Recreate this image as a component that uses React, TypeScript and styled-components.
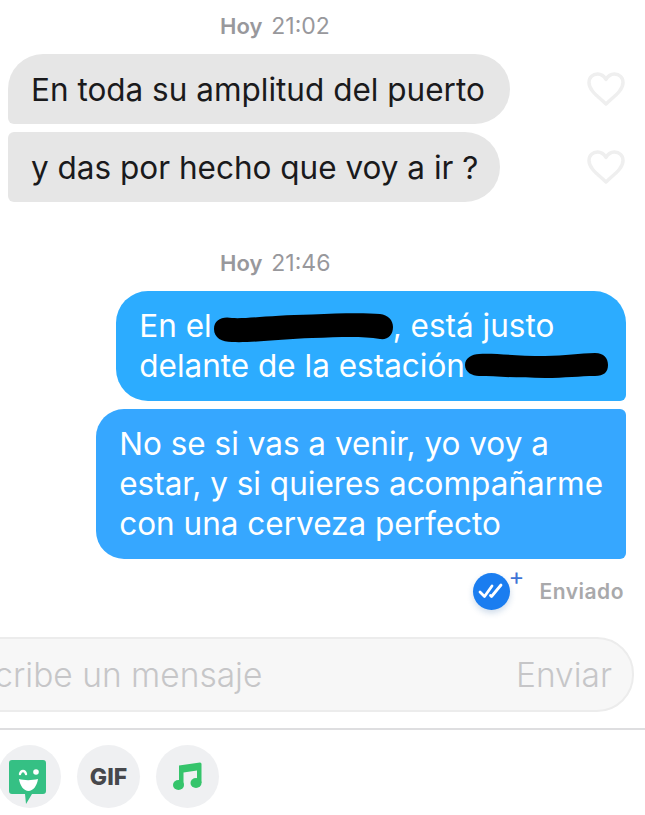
import React from "react"
import styled, { createGlobalStyle } from "styled-components"

const GlobalStyle = createGlobalStyle`
  html, body {
    margin: 0;
    padding: 0;
    background: #fff;
    overflow: hidden;
  }
`

const Page = styled.div`
  width: 645px;
  height: 815px;
  overflow: hidden;
  display: flex;
  flex-direction: column;
  font-family: Inter, Roboto, "Liberation Sans", sans-serif;
  background: #fff;
`

const Stamp = styled.div<{ $top: number }>`
  margin-top: ${p => p.$top}px;
  margin-left: 220px;
  height: 28px;
  display: flex;
  align-items: center;
  gap: 9px;
  font-size: 23px;
  color: #98989c;
  b {
    font-weight: 600;
    font-size: 22px;
  }
`

const Thread = styled.div`
  display: flex;
  flex-direction: column;
  gap: 8px;
  margin-top: 14px;
`

const IncomingRow = styled.div`
  display: flex;
  align-items: center;
  justify-content: space-between;
  padding: 0 19px 0 8px;
`

const IncomingBubble = styled.div<{ $first?: boolean }>`
  height: 70px;
  display: flex;
  align-items: center;
  padding: ${p => (p.$first ? "0 25px 0 23px" : "0 22px 0 23px")};
  box-sizing: border-box;
  background: #e6e6e6;
  color: #1a1a1c;
  font-size: 31.5px;
  border-radius: ${p => (p.$first ? "35px 35px 35px 6px" : "6px 35px 35px 6px")};
`

const OutgoingRow = styled.div`
  display: flex;
  justify-content: flex-end;
  padding-right: 19px;
`

const OutgoingBubble = styled.div<{ $first?: boolean }>`
  box-sizing: border-box;
  background: ${p => (p.$first ? "#2cacff" : "#36a7ff")};
  color: #fff;
  font-size: 31.5px;
  line-height: 40px;
  white-space: nowrap;
  padding: ${p => (p.$first ? "15px 17px 15px 23px" : "15px 23px 15px 23px")};
  border-radius: ${p => (p.$first ? "32px 32px 6px 32px" : "28px 6px 6px 28px")};
`

const Scribble = styled.svg`
  display: inline-block;
  vertical-align: middle;
`

const StatusRow = styled.div`
  display: flex;
  align-items: center;
  justify-content: flex-end;
  padding-right: 21px;
  margin-top: 13px;
  height: 38px;
`

const ReadBadge = styled.div`
  position: relative;
  width: 37px;
  height: 37px;
  border-radius: 50%;
  background: #1a7df0;
  box-shadow: 0 3px 6px rgba(30, 90, 160, 0.22);
  display: flex;
  align-items: center;
  justify-content: center;
  margin-right: 30px;
`

const Plus = styled.span`
  position: absolute;
  top: -8px;
  right: -15px;
  font-size: 24px;
  line-height: 24px;
  color: #3f74d6;
`

const StatusText = styled.span`
  font-size: 21px;
  font-weight: 600;
  letter-spacing: 0.5px;
  color: #a9a9ab;
`

const Composer = styled.div`
  margin: 27px 11px 0 -50px;
  height: 75px;
  box-sizing: border-box;
  display: flex;
  align-items: center;
  justify-content: space-between;
  padding: 0 20px 0 5px;
  background: #f7f7f7;
  border: 2px solid #ececec;
  border-radius: 37px;
  font-size: 33.5px;
  font-weight: 300;
  color: #c6c6c8;
`

const Toolbar = styled.div`
  margin-top: 16px;
  border-top: 2px solid #dedee0;
  padding: 15px 0 0;
  display: flex;
  gap: 16px;
  margin-left: -2px;
`

const ToolButton = styled.div`
  width: 63px;
  height: 63px;
  border-radius: 50%;
  background: #eff0f2;
  display: flex;
  align-items: center;
  justify-content: center;
  font-size: 23px;
  font-weight: 800;
  color: #47484c;
`

const StickerIcon = styled.svg`
  margin: 11px 4px 0 0;
`

const Heart = () => (
  <svg width="40" height="36" viewBox="0 0 40 36" fill="none">
    <path
      d="M20 33 C13 26 3 20 3 11.5 C3 6 7 3 11.5 3 C15 3 18 5 20 8.5 C22 5 25 3 28.5 3 C33 3 37 6 37 11.5 C37 20 27 26 20 33 Z"
      stroke="#efefef"
      strokeWidth="3.5"
      strokeLinejoin="round"
    />
  </svg>
)

export default function App() {
  return (
    <Page>
      <GlobalStyle />
      <Stamp $top={12}>
        <b>Hoy</b>
        <span>21:02</span>
      </Stamp>
      <Thread>
        <IncomingRow>
          <IncomingBubble $first>En toda su amplitud del puerto</IncomingBubble>
          <Heart />
        </IncomingRow>
        <IncomingRow>
          <IncomingBubble>y das por hecho que voy a ir ?</IncomingBubble>
          <Heart />
        </IncomingRow>
      </Thread>
      <Stamp $top={47}>
        <b>Hoy</b>
        <span>21:46</span>
      </Stamp>
      <Thread>
        <OutgoingRow>
          <OutgoingBubble $first>
            En el
            <Scribble width="181" height="30" viewBox="0 0 181 30">
              <path
                d="M2 16 C2 7 10 3 20 5 C35 6 60 2 100 1.5 C130 0 155 0 168 1 C176 2 181 7 181 14 C181 22 176 27 168 26 C150 23 130 24 100 25 C70 26 40 30 20 29 C10 29 2 25 2 16 Z"
                fill="#000"
              />
            </Scribble>
            , está justo
            <br />
            delante de la estación
            <Scribble width="144" height="34" viewBox="0 0 144 34">
              <path
                d="M0 14 C0 7 7 3 14 3 C30 2 50 5 80 5 C100 5 115 2 130 2 C139 2 143 7 143 14 C143 21 139 25 130 25 C115 25 100 27 80 27 C50 27 30 25 14 25 C7 25 0 21 0 14 Z"
                fill="#000"
              />
            </Scribble>
          </OutgoingBubble>
        </OutgoingRow>
        <OutgoingRow>
          <OutgoingBubble>
            No se si vas a venir, yo voy a
            <br />
            estar, y si quieres acompañarme
            <br />
            con una cerveza perfecto
          </OutgoingBubble>
        </OutgoingRow>
      </Thread>
      <StatusRow>
        <ReadBadge>
          <svg width="26" height="18" viewBox="0 0 26 18" fill="none" stroke="#fff" strokeWidth="2.8" strokeLinecap="round" strokeLinejoin="round">
            <path d="M2 10 L6.5 14.5 L14 4" />
            <path d="M12.5 13.5 L13.5 14.5 L23 3" />
          </svg>
          <Plus>+</Plus>
        </ReadBadge>
        <StatusText>Enviado</StatusText>
      </StatusRow>
      <Composer>
        <span>Escribe un mensaje</span>
        <span>Enviar</span>
      </Composer>
      <Toolbar>
        <ToolButton>
          <StickerIcon width="37" height="44" viewBox="0 0 37 44">
            <path d="M3 0 H34 Q37 0 37 3 V31 Q37 34 34 34 H23 L17 44 L16 34 H3 Q0 34 0 31 V3 Q0 0 3 0 Z" fill="#35c084" />
            <path d="M10 19 C15 20.5 23 20.5 29 19 C28 26 24 31 19.5 31 C15 31 11 26 10 19 Z" fill="#fff" />
            <path d="M11 14 C12 10 16 10 17 14" fill="none" stroke="#fff" strokeWidth="2.4" strokeLinecap="round" />
            <circle cx="27" cy="12" r="2.8" fill="#fff" />
          </StickerIcon>
        </ToolButton>
        <ToolButton>GIF</ToolButton>
        <ToolButton>
          <svg width="30" height="29" viewBox="0 0 30 29" fill="#35c46b">
            <path d="M6 3.5 L27 0.5 Q28.5 0.5 28.5 2 V21 H24 V8.5 L10.5 10.5 V23 H6 Z" />
            <ellipse cx="5.5" cy="23" rx="5.5" ry="5" />
            <ellipse cx="23" cy="21" rx="5.5" ry="5" />
          </svg>
        </ToolButton>
      </Toolbar>
    </Page>
  )
}
